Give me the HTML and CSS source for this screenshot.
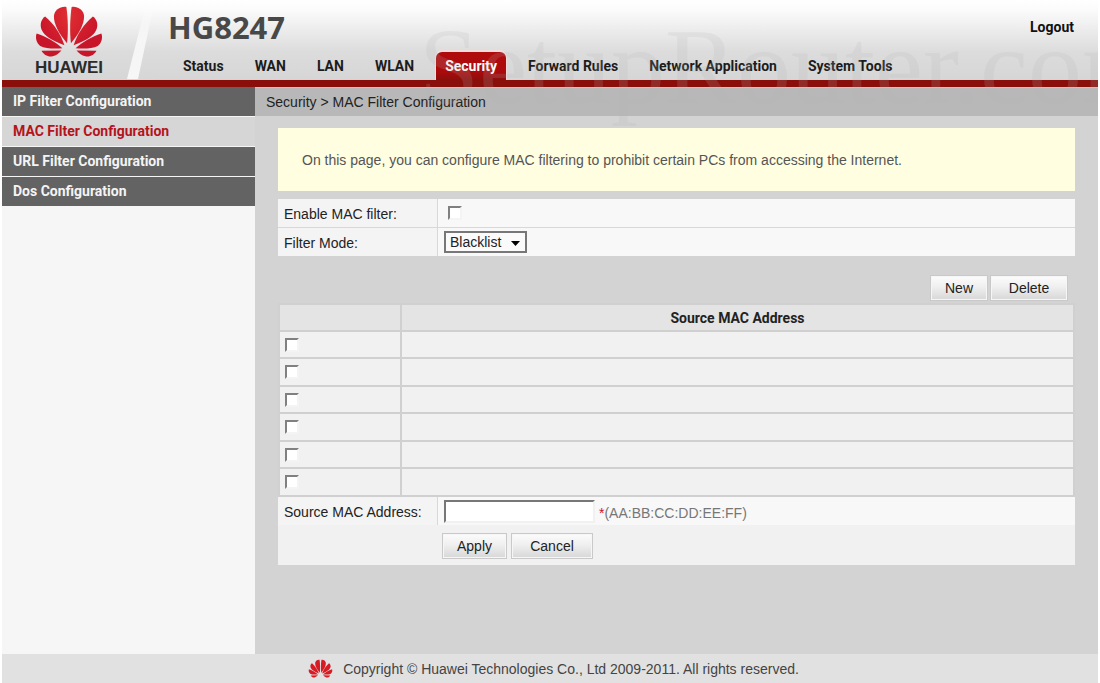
FILE: index.html
```html
<!DOCTYPE html>
<html lang="en">
<head>
<meta charset="utf-8">
<title>HG8247</title>
<link rel="stylesheet" href="styles.css">
</head>
<body>
<svg class="defs" aria-hidden="true">
  <defs>
    <radialGradient id="petal" gradientUnits="userSpaceOnUse" cx="235" cy="38" r="120">
      <stop offset="0" stop-color="#f08a74"/>
      <stop offset="0.3" stop-color="#dd2b31"/>
      <stop offset="1" stop-color="#c9152a"/>
    </radialGradient>
    <g id="half">
      <path d="M203 128C207 95 206 50 201 17C184 14 165 25 163 44C162 70 178 98 203 128Z"/>
      <path d="M195 134C184 100 164 70 136 46C124 54 119 70 125 86C134 107 158 120 195 134Z"/>
      <path d="M189 143C168 124 140 108 110 98C105 112 110 127 121 136C137 144 162 145 189 143Z"/>
      <path d="M186 150L125 151C131 163 145 171 159 168C170 166 178 158 186 150Z"/>
    </g>
    <symbol id="flower" viewBox="102 12 214 160">
      <use href="#half"/>
      <use href="#half" transform="translate(418 0) scale(-1 1)"/>
    </symbol>
    <linearGradient id="shine" x1="0" y1="0" x2="0" y2="1">
      <stop offset="0" stop-color="#fff" stop-opacity="0"/>
      <stop offset="0.5" stop-color="#fff" stop-opacity="0.7"/>
      <stop offset="1" stop-color="#fff" stop-opacity="0.8"/>
    </linearGradient>
  </defs>
</svg>
<div class="page">
  <header class="header">
    <div class="brand">
      <svg class="brand-flower" role="img" aria-label="Huawei"><use href="#flower"/></svg>
      <span class="brand-name">HUAWEI</span>
    </div>
    <svg class="slash" viewBox="0 0 28 80" preserveAspectRatio="none" aria-hidden="true"><path d="M20 4L28 4L12 79L1 79Z"/></svg>
    <div class="head-main">
      <div class="head-top">
        <h1 class="model">HG8247</h1>
        <a class="logout" href="#">Logout</a>
      </div>
      <nav class="nav">
        <a href="#">Status</a>
        <a href="#">WAN</a>
        <a href="#">LAN</a>
        <a href="#">WLAN</a>
        <a class="active" href="#">Security</a>
        <a href="#">Forward Rules</a>
        <a href="#">Network Application</a>
        <a href="#">System Tools</a>
      </nav>
    </div>
  </header>
  <div class="body">
    <nav class="side">
      <a href="#">IP Filter Configuration</a>
      <a class="current" href="#">MAC Filter Configuration</a>
      <a href="#">URL Filter Configuration</a>
      <a href="#">Dos Configuration</a>
    </nav>
    <main class="main">
      <div class="crumb">Security &gt; MAC Filter Configuration</div>
      <div class="content">
        <p class="note">On this page, you can configure MAC filtering to prohibit certain PCs from accessing the Internet.</p>
        <div class="form">
          <label class="label" for="enable">Enable MAC filter:</label>
          <div class="field"><input class="check" id="enable" type="checkbox"></div>
          <label class="label" for="mode">Filter Mode:</label>
          <div class="field">
            <span class="pick">
              <select id="mode"><option>Blacklist</option><option>Whitelist</option></select>
              <svg class="arrow" viewBox="0 0 9 5" aria-hidden="true"><path d="M0 0H9L4.5 5Z"/></svg>
            </span>
          </div>
        </div>
        <div class="tools">
          <button type="button" class="btn">New</button>
          <button type="button" class="btn wide">Delete</button>
        </div>
        <table class="list">
          <thead><tr><th class="tick"></th><th>Source MAC Address</th></tr></thead>
          <tbody>
            <tr><td><input class="check" type="checkbox" aria-label="Select row 1"></td><td></td></tr>
            <tr><td><input class="check" type="checkbox" aria-label="Select row 2"></td><td></td></tr>
            <tr><td><input class="check" type="checkbox" aria-label="Select row 3"></td><td></td></tr>
            <tr><td><input class="check" type="checkbox" aria-label="Select row 4"></td><td></td></tr>
            <tr><td><input class="check" type="checkbox" aria-label="Select row 5"></td><td></td></tr>
            <tr><td><input class="check" type="checkbox" aria-label="Select row 6"></td><td></td></tr>
          </tbody>
        </table>
        <form class="entry">
          <div class="form">
            <label class="label" for="mac">Source MAC Address:</label>
            <div class="field"><input class="text" id="mac" type="text"><span class="hint"><span class="star">*</span>(AA:BB:CC:DD:EE:FF)</span></div>
          </div>
          <div class="actions">
            <button type="button" class="btn apply">Apply</button>
            <button type="button" class="btn cancel">Cancel</button>
          </div>
        </form>
      </div>
    </main>
  </div>
  <footer class="footer">
    <svg class="foot-flower" aria-hidden="true"><use href="#flower"/></svg>
    <span>Copyright © Huawei Technologies Co., Ltd 2009-2011. All rights reserved.</span>
  </footer>
  <div class="watermark" aria-hidden="true">SetupRouter.com</div>
</div>
</body>
</html>
```
FILE: styles.css
```css
* { box-sizing: border-box; }
body {
  margin: 0;
  background: #fff;
  color: #222;
  font: 14px/16px "Liberation Sans", Arial, sans-serif;
}
a { color: inherit; text-decoration: none; }
.defs { position: absolute; width: 0; height: 0; }
.page {
  position: relative;
  display: flex;
  flex-direction: column;
  min-height: 100vh;
  margin: 0 2px;
  overflow: hidden;
}

/* header */
.header {
  display: flex;
  height: 87px;
  border-bottom: 7px solid #8a0f0b;
  background: linear-gradient(#fff 0, #fbfbfb 12%, #dcdcdc 65%, #d6d6d6 100%);
}
.brand {
  display: flex;
  flex-direction: column;
  align-items: center;
  width: 134px;
  padding-top: 5px;
}
.brand-flower { width: 70px; height: 53px; fill: url(#petal); }
.brand-name {
  color: #2b2b2b;
  font-size: 17px;
  font-weight: bold;
  line-height: 20px;
}
.slash { width: 28px; height: 80px; margin-left: -10px; fill: url(#shine); }
.head-main { flex: 1; display: flex; flex-direction: column; }
.head-top {
  flex: 1;
  display: flex;
  justify-content: space-between;
  align-items: flex-start;
  padding: 7px 24px 0 14px;
}
.model {
  margin: 0;
  color: #484848;
  font: bold 31px/40px "Open Sans", sans-serif;
}
.logout { padding-top: 12px; font: bold 14px/16px Roboto, sans-serif; color: #111; }
.nav {
  display: flex;
  gap: 13px;
  padding-left: 20px;
  font: bold 14px/28px Roboto, sans-serif;
  color: #1c1c1c;
  box-shadow: inset 0 -1px #eccaca;
}
.nav a { padding: 0 9px; border-radius: 6px 6px 0 0; white-space: nowrap; }
.nav .active {
  background: linear-gradient(#b00a0d, #ad0a0c 70%, #8a0f0b);
  color: #fff;
  box-shadow: 0 -1px 0 1px #f3dcdc;
  clip-path: inset(-2px -2px 0 -2px);
}

/* body */
.body { flex: 1; display: flex; }
.side {
  width: 253px;
  background: #f6f6f6;
  font: bold 14px/29px Roboto, sans-serif;
}
.side a {
  display: block;
  padding-left: 11px;
  border-bottom: 1px solid #f6f6f6;
  background: #636363;
  color: #f4f4f4;
}
.side .current { background: #d6d6d6; color: #b5131c; }
.main { flex: 1; background: #d3d3d3; }
.crumb { padding: 1px 11px 0; border-top: 1px solid #dcbcbc; background: #b8b8b8; line-height: 27px; }
.content { padding: 12px 23px 0; }
.note {
  margin: 0 0 8px;
  padding: 24px 24px 23px;
  background: #fffee1;
  color: #555;
}
.form {
  display: grid;
  grid-template-columns: 159px 1fr;
  gap: 1px;
  background: #d8d8d8;
}
.label { padding: 7px 6px 5px; background: #f4f4f4; }
.field { display: flex; align-items: center; padding: 0 6px; background: #f8f8f8; }
.check {
  appearance: none;
  display: block;
  width: 14px;
  height: 14px;
  margin: 0;
  border: 2px solid;
  border-color: #808080 #f4f4f4 #f4f4f4 #808080;
  background: #fff;
}
.field .check { margin-left: 4px; }
.check:checked { background: #333; }
.pick { position: relative; display: flex; }
.pick select {
  appearance: none;
  width: 83px;
  height: 22px;
  padding: 0 4px;
  border: 2px solid #777;
  border-radius: 0;
  background: #fafafa;
  color: #222;
  font: inherit;
}
.arrow { position: absolute; right: 7px; top: 10px; width: 9px; height: 5px; pointer-events: none; }
.tools { display: flex; justify-content: flex-end; gap: 4px; padding: 20px 8px 3px; }
.btn {
  width: 56px;
  height: 24px;
  padding: 0;
  border: 1px solid #f6f6f6;
  outline: 1px solid #c9c9c9;
  background: linear-gradient(#fbfbfb, #efefef 45%, #d9d9d9);
  color: #222;
  font: inherit;
}
.wide { width: 76px; }

.list {
  width: 100%;
  border: 2px solid #d3d3d3;
  border-top: 0;
  border-collapse: collapse;
  background: #f1f1f1;
}
.list th, .list td { height: 27px; padding: 0 6px; border: 2px solid #d0d0d0; }
.list td:first-child { padding: 0 5px; }
.list tr:nth-child(even) td { height: 28px; }
.list th { background: #e4e4e4; font: bold 14px/16px Roboto, sans-serif; }
.list .tick { width: 122px; }

.entry { background: #f1f1f1; }
.text {
  width: 151px;
  height: 23px;
  padding: 0 4px;
  border: 2px solid;
  border-color: #777 #f1f1f1 #f1f1f1 #777;
  background: #fff;
  font: inherit;
}
.hint { padding: 3px 0 0 4px; color: #777; }
.star { color: #c8102e; }
.actions { display: flex; gap: 6px; padding: 9px 0 7px 165px; }
.apply { width: 63px; }
.cancel { width: 80px; }

.footer {
  display: flex;
  justify-content: center;
  align-items: center;
  gap: 10px;
  height: 29px;
  padding-left: 7px;
  background: #e1e1e1;
  color: #444;
}
.foot-flower { width: 25px; height: 19px; fill: #d81a24; }

.watermark {
  position: absolute;
  top: 7px;
  left: 417px;
  color: #b4b4b4;
  opacity: 0.17;
  font: 108px/120px "Liberation Serif", serif;
  white-space: nowrap;
  pointer-events: none;
}
```
